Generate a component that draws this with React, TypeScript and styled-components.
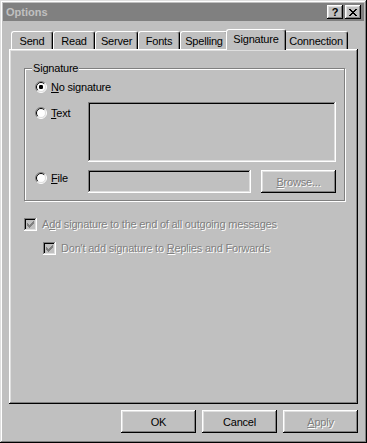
import styled, { createGlobalStyle } from "styled-components"

const GlobalStyle = createGlobalStyle`
	html, body {
		margin: 0;
		padding: 0;
		background: #c0c0c0;
	}
	body {
		font-family: "Liberation Sans", Arial, sans-serif;
		font-size: 11px;
		letter-spacing: -0.2px;
		color: #000;
	}
`

const raised = `
	box-shadow: inset -1px -1px #000, inset 1px 1px #fff, inset -2px -2px #808080,
		inset 2px 2px #dfdfdf;
`

const sunken = `
	box-shadow: inset -1px -1px #fff, inset 1px 1px #808080, inset -2px -2px #dfdfdf,
		inset 2px 2px #000;
`

const Window = styled.div`
	box-sizing: border-box;
	width: 367px;
	height: 443px;
	padding: 3px;
	display: flex;
	flex-direction: column;
	background: #c0c0c0;
	box-shadow: inset -1px -1px #000, inset 1px 1px #dfdfdf, inset -2px -2px #808080,
		inset 2px 2px #fff;
`

const TitleBar = styled.div`
	height: 18px;
	display: flex;
	align-items: center;
	padding: 0 3px;
	background: #808080;
`

const Title = styled.span`
	flex: 1;
	color: #c0c0c0;
	font-weight: bold;
	font-size: 11px;
	letter-spacing: 0;
	line-height: 18px;
`

const TitleButtons = styled.div`
	display: flex;
	gap: 2px;
`

const TitleButton = styled.div`
	width: 16px;
	height: 14px;
	display: flex;
	align-items: center;
	justify-content: center;
	background: #c0c0c0;
	font-weight: bold;
	font-size: 11px;
	line-height: 14px;
	${raised}
`

const Body = styled.div`
	flex: 1;
	display: flex;
	flex-direction: column;
	padding: 8px 6px 7px;
`

const TabRow = styled.div`
	height: 20px;
	display: flex;
	align-items: flex-end;
	padding-left: 2px;
`

const Tab = styled.div<{ $w: number; $active?: boolean }>`
	box-sizing: border-box;
	position: relative;
	width: ${(p) => p.$w + (p.$active ? 4 : 0)}px;
	height: ${(p) => (p.$active ? 21 : 18)}px;
	margin: ${(p) => (p.$active ? "0 -2px -1px" : "0")};
	z-index: ${(p) => (p.$active ? 1 : 0)};
	display: flex;
	justify-content: center;
	align-items: center;
	padding-bottom: ${(p) => (p.$active ? 3 : 0)}px;
	background: #c0c0c0;
	border-left: 1px solid #fff;
	border-top: 1px solid #fff;
	border-right: 1px solid #000;
	border-radius: 3px 3px 0 0;
	box-shadow: inset -1px 0 #808080;
	white-space: nowrap;
`

const Panel = styled.div`
	box-sizing: border-box;
	height: 355px;
	padding: 19px 13px 0 15px;
	${raised}
`

const GroupBox = styled.div`
	position: relative;
	display: flex;
	flex-direction: column;
	gap: 7px;
	padding: 10px 8px 7px 10px;
	border: 1px solid #808080;
	box-shadow: inset 1px 1px #fff, 1px 1px #fff;
`

const Legend = styled.span`
	position: absolute;
	top: -7px;
	left: 7px;
	padding: 0 1px;
	line-height: 13px;
	background: #c0c0c0;
`

const OptionRow = styled.div<{ $gap?: number }>`
	display: grid;
	grid-template-columns: 53px 1fr;
	align-items: start;
	margin-top: ${(p) => p.$gap ?? 0}px;
`

const RadioLabel = styled.label<{ $offset?: number }>`
	height: 16px;
	display: flex;
	align-items: center;
	gap: 4px;
	margin-top: ${(p) => p.$offset ?? 0}px;
	white-space: nowrap;
`

const TextBox = styled.div`
	height: 60px;
	background: #c0c0c0;
	${sunken}
`

const FileField = styled.div`
	display: flex;
	gap: 10px;
`

const FileInput = styled.div`
	flex: 1;
	height: 23px;
	background: #c0c0c0;
	${sunken}
`

const Button = styled.div<{ $disabled?: boolean }>`
	box-sizing: border-box;
	width: 75px;
	height: 23px;
	display: flex;
	align-items: center;
	justify-content: center;
	background: #c0c0c0;
	color: ${(p) => (p.$disabled ? "#808080" : "#000")};
	text-shadow: ${(p) => (p.$disabled ? "1px 1px #fff" : "none")};
	${raised}
`

const CheckList = styled.div`
	display: flex;
	flex-direction: column;
	gap: 8px;
	margin-top: 15px;
`

const CheckRow = styled.label<{ $indent?: number }>`
	height: 16px;
	display: flex;
	align-items: center;
	gap: 5px;
	padding-left: ${(p) => p.$indent ?? 0}px;
	color: #808080;
	text-shadow: 1px 1px #fff;
	white-space: nowrap;
`

const CheckBox = styled.span`
	width: 13px;
	height: 13px;
	flex: none;
	display: block;
	background: #c0c0c0;
	${sunken}

	svg {
		display: block;
	}
`

const ButtonRow = styled.div`
	display: flex;
	justify-content: flex-end;
	gap: 6px;
	margin-top: 6px;
`

const Radio = ({ checked }: { checked?: boolean }) => (
	<svg width="12" height="12" viewBox="0 0 12 12" style={{ flex: "none" }}>
		<circle cx="6" cy="6" r="5" fill="#fff" />
		<path d="M2.1 9.9 A5.5 5.5 0 0 1 9.9 2.1" fill="none" stroke="#808080" />
		<path d="M9.9 2.1 A5.5 5.5 0 0 1 2.1 9.9" fill="none" stroke="#fff" />
		<path d="M2.8 9.2 A4.5 4.5 0 0 1 9.2 2.8" fill="none" stroke="#000" />
		<path d="M9.2 2.8 A4.5 4.5 0 0 1 2.8 9.2" fill="none" stroke="#dfdfdf" />
		{checked && <rect x="4" y="4" width="4" height="4" rx="1.2" fill="#000" />}
	</svg>
)

const Check = () => (
	<CheckBox>
		<svg width="13" height="13" viewBox="0 0 13 13" shapeRendering="crispEdges">
			<path
				fill="#808080"
				d="M9 3h1v1h-1zM8 4h2v1h-2zM3 5h1v1h-1zM7 5h3v1h-3zM3 6h2v1h-2zM6 6h3v1h-3zM3 7h5v1h-5zM4 8h3v1h-3zM5 9h1v1h-1z"
			/>
		</svg>
	</CheckBox>
)

const CloseGlyph = () => (
	<svg width="8" height="7" viewBox="0 0 8 7" shapeRendering="crispEdges">
		<path
			fill="#000"
			d="M0 0h2v1h-2zM6 0h2v1h-2zM1 1h2v1h-2zM5 1h2v1h-2zM2 2h4v1h-4zM3 3h2v1h-2zM2 4h4v1h-4zM1 5h2v1h-2zM5 5h2v1h-2zM0 6h2v1h-2zM6 6h2v1h-2z"
		/>
	</svg>
)

const tabs = [
	{ label: "Send", w: 42 },
	{ label: "Read", w: 42 },
	{ label: "Server", w: 43 },
	{ label: "Fonts", w: 42 },
	{ label: "Spelling", w: 48 },
	{ label: "Signature", w: 56, active: true },
	{ label: "Connection", w: 64 },
]

export default function App() {
	return (
		<>
			<GlobalStyle />
			<Window>
				<TitleBar>
					<Title>Options</Title>
					<TitleButtons>
						<TitleButton>?</TitleButton>
						<TitleButton>
							<CloseGlyph />
						</TitleButton>
					</TitleButtons>
				</TitleBar>
				<Body>
					<TabRow>
						{tabs.map((t) => (
							<Tab key={t.label} $w={t.w} $active={t.active}>
								{t.label}
							</Tab>
						))}
					</TabRow>
					<Panel>
						<GroupBox>
							<Legend>Signature</Legend>
							<OptionRow>
								<RadioLabel>
									<Radio checked />
									<span>
										<u>N</u>o signature
									</span>
								</RadioLabel>
							</OptionRow>
							<OptionRow>
								<RadioLabel $offset={3}>
									<Radio />
									<span>
										<u>T</u>ext
									</span>
								</RadioLabel>
								<TextBox />
							</OptionRow>
							<OptionRow $gap={1}>
								<RadioLabel>
									<Radio />
									<span>
										<u>F</u>ile
									</span>
								</RadioLabel>
								<FileField>
									<FileInput />
									<Button $disabled>
										<span>
											<u>B</u>rowse...
										</span>
									</Button>
								</FileField>
							</OptionRow>
						</GroupBox>
						<CheckList>
							<CheckRow>
								<Check />
								<span>
									A<u>d</u>d signature to the end of all outgoing messages
								</span>
							</CheckRow>
							<CheckRow $indent={19}>
								<Check />
								<span>
									Don't add signature to <u>R</u>eplies and Forwards
								</span>
							</CheckRow>
						</CheckList>
					</Panel>
					<ButtonRow>
						<Button>OK</Button>
						<Button>Cancel</Button>
						<Button $disabled>
							<span>
								<u>A</u>pply
							</span>
						</Button>
					</ButtonRow>
				</Body>
			</Window>
		</>
	)
}
